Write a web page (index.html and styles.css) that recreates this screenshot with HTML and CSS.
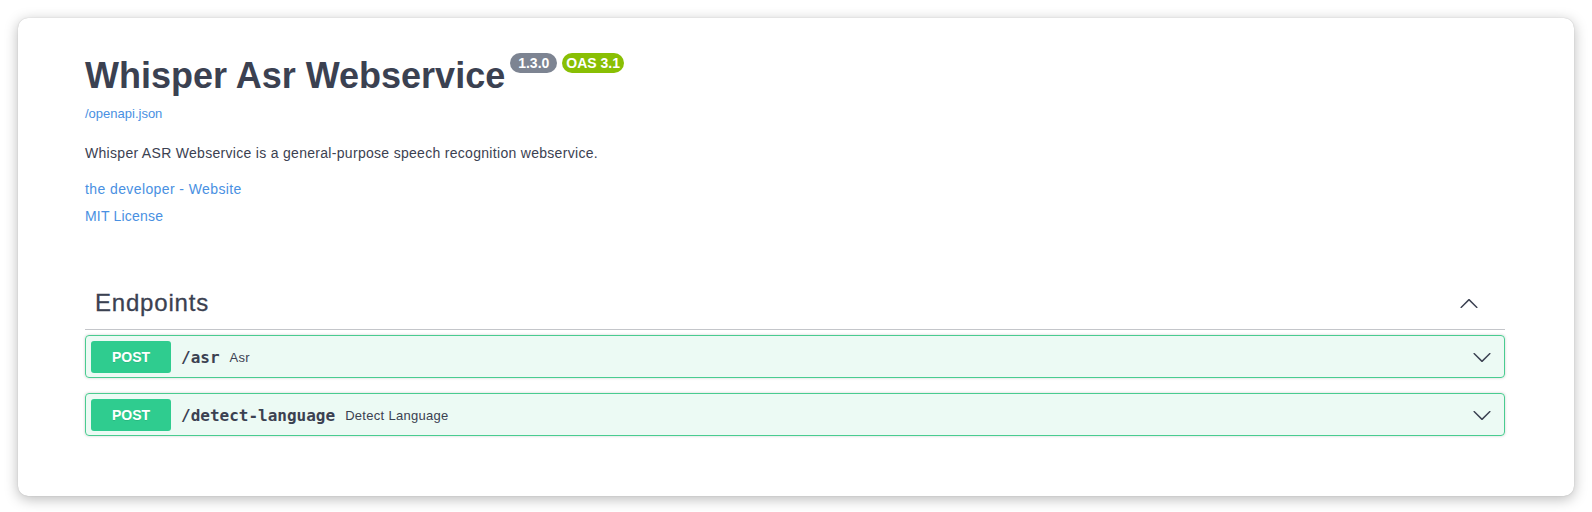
FILE: index.html
```html
<!DOCTYPE html>
<html lang="en">
<head>
<meta charset="utf-8">
<title>Whisper Asr Webservice - Swagger UI</title>
<link rel="stylesheet" href="styles.css">
</head>
<body>
<div class="window">
  <div class="wrapper">
    <div class="info">
      <div class="title-row">
        <h2 class="title">Whisper Asr Webservice</h2>
        <span class="badge badge-version">1.3.0</span>
        <span class="badge badge-oas">OAS 3.1</span>
      </div>
      <a class="spec-link" href="#">/openapi.json</a>
      <p class="desc">Whisper ASR Webservice is a general-purpose speech recognition webservice.</p>
      <a class="info-link contact" href="#">the developer - Website</a>
      <a class="info-link license" href="#">MIT License</a>
    </div>

    <section class="tag-section">
      <div class="tag-header">
        <h3 class="tag-name">Endpoints</h3>
        <span class="tag-arrow">
          <svg viewBox="0 0 20 20" width="20" height="20"><path d="M17.418 6.109c.272-.268.709-.268.979 0s.271.701 0 .969l-7.908 7.830c-.27.268-.707.268-.979 0l-7.908-7.830c-.27-.268-.27-.701 0-.969.271-.268.709-.268.979 0L10 13.250l7.418-7.141z" transform="rotate(180 10 10.5)"/></svg>
        </span>
      </div>

      <div class="opblock">
        <span class="method">POST</span>
        <span class="path">/asr</span>
        <span class="summary">Asr</span>
        <span class="op-arrow">
          <svg viewBox="0 0 20 20" width="20" height="20"><path d="M17.418 6.109c.272-.268.709-.268.979 0s.271.701 0 .969l-7.908 7.830c-.27.268-.707.268-.979 0l-7.908-7.830c-.27-.268-.27-.701 0-.969.271-.268.709-.268.979 0L10 13.250l7.418-7.141z"/></svg>
        </span>
      </div>

      <div class="opblock">
        <span class="method">POST</span>
        <span class="path">/detect-language</span>
        <span class="summary">Detect Language</span>
        <span class="op-arrow">
          <svg viewBox="0 0 20 20" width="20" height="20"><path d="M17.418 6.109c.272-.268.709-.268.979 0s.271.701 0 .969l-7.908 7.830c-.27.268-.707.268-.979 0l-7.908-7.830c-.27-.268-.27-.701 0-.969.271-.268.709-.268.979 0L10 13.250l7.418-7.141z"/></svg>
        </span>
      </div>
    </section>
  </div>
</div>
</body>
</html>
```

FILE: styles.css
```css
html, body {
  margin: 0;
  padding: 0;
  background: #ffffff;
}

body {
  padding: 18px;
  font-family: "Liberation Sans", Arial, sans-serif;
  color: #3b4151;
}

.window {
  background: #ffffff;
  border-radius: 10px;
  box-shadow: 0 3px 14px rgba(0, 0, 0, 0.28), 0 0 1px rgba(0, 0, 0, 0.25);
  padding: 36px 2px 45px 0;
}

.wrapper {
  max-width: 1420px;
  margin: 0 auto;
}

.info {
  display: flex;
  flex-direction: column;
  align-items: flex-start;
}

.title-row {
  display: flex;
  align-items: flex-start;
}

.title {
  margin: 0;
  font-size: 36px;
  line-height: 44px;
  font-weight: 700;
  color: #3b4151;
}

.badge {
  margin-left: 5px;
  margin-top: -1px;
  padding: 2px 4px;
  border-radius: 57px;
  font-size: 14px;
  line-height: 16px;
  font-weight: 700;
  color: #ffffff;
  white-space: pre;
}

.badge-version {
  background: #7d8492;
  padding: 2px 8px;
}

.badge-oas {
  background: #89bf04;
}

.spec-link {
  margin-top: 8px;
  font-size: 13px;
  line-height: 16px;
  color: #4990e2;
  text-decoration: none;
}

.desc {
  margin: 21px 0 0;
  font-size: 14px;
  line-height: 20px;
  letter-spacing: 0.3px;
  color: #3b4151;
}

.info-link {
  font-size: 14px;
  line-height: 20px;
  letter-spacing: 0.3px;
  color: #4990e2;
  text-decoration: none;
}

.contact {
  margin-top: 16px;
  letter-spacing: 0.4px;
}

.license {
  margin-top: 7px;
  letter-spacing: 0.2px;
}

.tag-section {
  margin-top: 51px;
}

.tag-header {
  display: flex;
  align-items: center;
  padding: 10px 20px 10px 10px;
  margin-bottom: 5px;
  border-bottom: 1px solid rgba(59, 65, 81, 0.3);
}

.tag-name {
  flex: 1 1 auto;
  margin: 0;
  font-size: 24px;
  line-height: 32px;
  font-weight: 400;
  letter-spacing: 0.8px;
  color: #3b4151;
  -webkit-text-stroke: 0.3px #3b4151;
}

.tag-arrow {
  display: flex;
  margin-right: 6px;
  fill: #3b4151;
}

.opblock {
  display: flex;
  align-items: center;
  margin-bottom: 15px;
  padding: 5px 5px 4px;
  border: 1px solid #49cc90;
  border-radius: 4px;
  background: rgba(73, 204, 144, 0.1);
  box-shadow: 0 0 3px rgba(0, 0, 0, 0.19);
}

.method {
  min-width: 80px;
  padding: 8px 0;
  border-radius: 3px;
  background: #2fcc8f;
  color: #ffffff;
  font-size: 14px;
  line-height: 16px;
  font-weight: 700;
  text-align: center;
  text-shadow: 0 1px 0 rgba(0, 0, 0, 0.1);
}

.path {
  padding: 0 10px;
  font-family: "DejaVu Sans Mono", monospace;
  font-size: 16px;
  font-weight: 700;
  color: #3b4151;
}

.summary {
  flex: 1 1 auto;
  font-size: 13px;
  letter-spacing: 0.3px;
  color: #3b4151;
}

.op-arrow {
  display: flex;
  margin-right: 7px;
  fill: #3b4151;
}
```
